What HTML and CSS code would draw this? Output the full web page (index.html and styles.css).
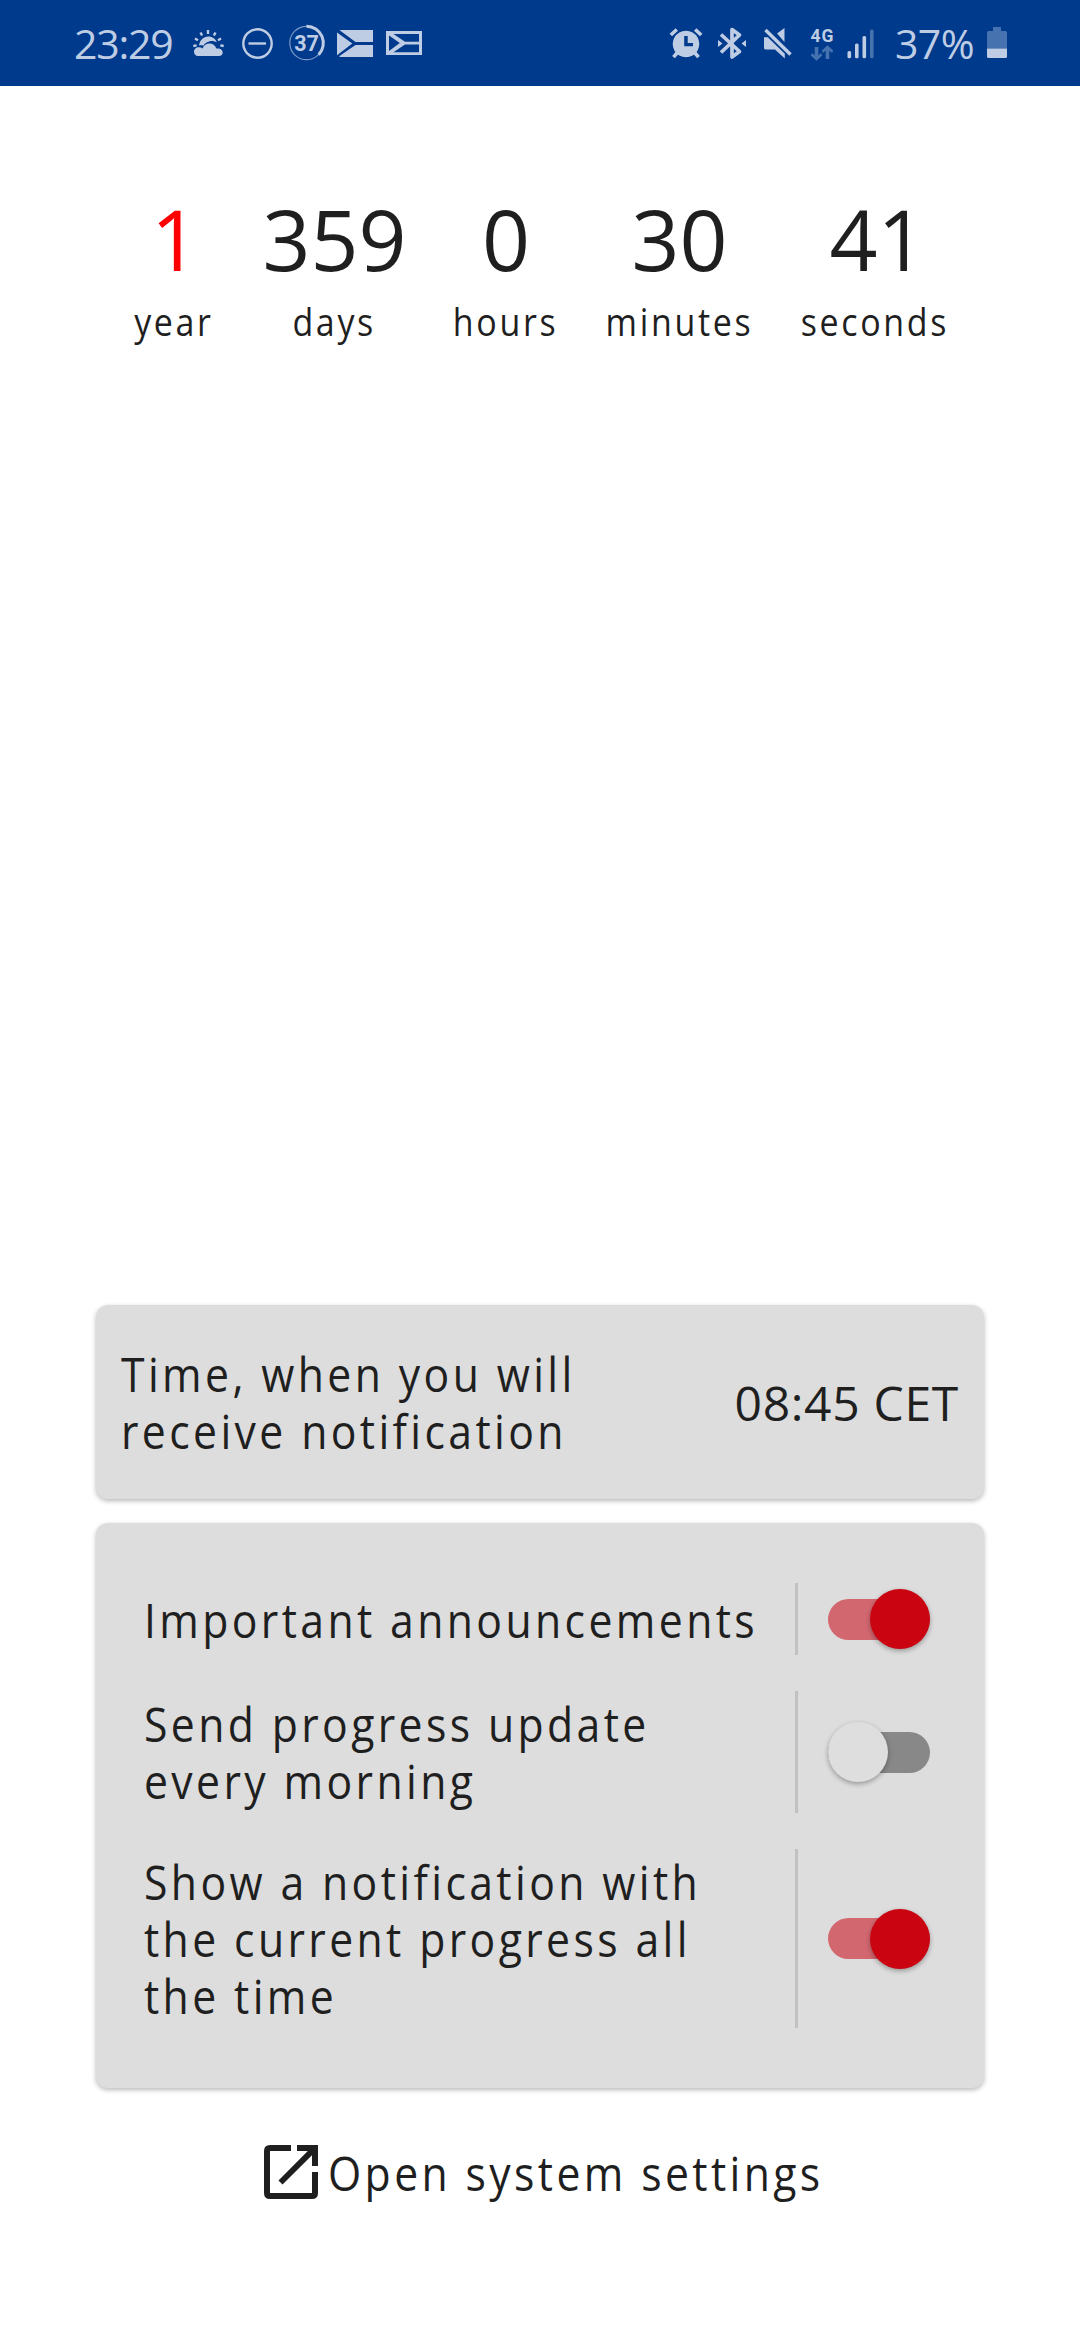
FILE: index.html
```
<!DOCTYPE html>
<html lang="en">
<head>
<meta charset="utf-8">
<title>Countdown</title>
<link rel="stylesheet" href="styles.css">
</head>
<body>
<header class="status">
  <span class="clock">23:29</span>
  <svg class="status-left" viewBox="190 0 234 86" width="234" height="86">
    <g fill="none" stroke="#bfcde4" stroke-width="2.4">
      <path d="M208 30v4M200.500 32.500l1.600 3M215.500 32.500l-1.600 3M195 38.500l3 1.700M221 38.500l-3 1.700M193.300 46l3.400-.6M223.700 46l-3.400-.6"/>
      <circle cx="257.500" cy="43.500" r="14.200"/>
      <path d="M248.500 43.500h17.500"/>
      <circle cx="306.500" cy="43" r="16.700" stroke-width="1.200" opacity=".65"/>
      <path d="M306.500 26.200a16.800 16.800 0 0 1 12.200 28.400" stroke-width="3"/>
    </g>
    <g fill="#bfcde4">
      <path d="M199 45.500c.8-5.500 4.500-9 9.300-9 4 0 7.300 2.300 8.600 6-2-1.300-4.600-1.800-6.900-1.300-3.400.6-5.600 2.500-6.600 4.600-1.600-.6-3-.6-4.400-.3z"/>
      <path d="M198 56a4 4 0 0 1-4-4.200c0-2.800 2.300-4.700 5-4.600 1.400 0 2.500.4 3.500 1.200 1.300-3.200 4-5 7-5 3.500 0 6 2 6.800 5.200 3-.6 6.400.8 6.400 4 0 2-1.500 3.400-3.700 3.400z"/>
      <path d="M339.500 30H373v12h-17.500L341 31.200zM337 32.600L352.300 43.400 337 55.200zM355.500 45H373v12h-33.500v-1z"/>
      <path fill-rule="evenodd" d="M386 31h36v24h-36zM393.500 34l11.500 7.800h14V34zM389 35.500v15.600L399.800 43zM405 44.600L393.500 52.200H419v-7.600z"/>
    </g>
    <text class="badge" x="306.500" y="51" text-anchor="middle">37</text>
  </svg>
  <svg class="status-right" viewBox="668 0 210 86" width="210" height="86">
    <g fill="none" stroke="#bfcde4" stroke-width="3.600">
      <path d="M670.800 35l6-5.500M701.200 35l-6-5.500M677 53l-3.500 4.200M695 53l3.500 4.200"/>
      <path d="M721 34.500l18.500 17-7.500 5.500V29.500l7.500 5.500L721 52.500" stroke-width="3.700" stroke-linejoin="round"/>
      <path d="M765.500 30L790.500 54.500" stroke-width="3.400"/>
    </g>
    <g fill="#bfcde4">
      <path fill-rule="evenodd" d="M686 30.700a13.300 13.300 0 1 1-.01 0zM684.200 36v10.300H693V43h-5.300v-7z"/>
      <path d="M718 40l4.500 3.500L718 47zM746 40l-4.500 3.500L746 47z"/>
      <path d="M784.500 28v14L777 33.500zM764 37.200h3.800l17 16.600V58.500L775 49.500h-9.600q-1.400 0-1.400-1.400z"/>
      <rect x="847.500" y="51" width="3.600" height="7.300" rx="1.500"/>
      <rect x="855" y="43.500" width="3.600" height="14.800" rx="1.500"/>
      <rect x="862.500" y="36" width="3.600" height="22.300" rx="1.500"/>
    </g>
    <g fill="#4672b0">
      <rect x="870" y="29.500" width="3.600" height="28.800" rx="1.500"/>
      <path d="M814.700 47h3.600v8.500l2.700-2.500 1.200 2.500-5.700 5.300-5.700-5.300 1.200-2.500 2.700 2.500zM825.700 59h3.600v-8.500l2.700 2.500 1.200-2.500-5.700-5.300-5.700 5.300 1.200 2.500 2.700-2.500z"/>
    </g>
    <text class="net" x="810.500" y="41.500" textLength="23">4G</text>
  </svg>
  <span class="percent">37%</span>
  <svg class="battery" viewBox="0 0 20 32" width="20" height="32">
    <path fill="#4672b0" d="M6 0h8v4h4.500q1.500 0 1.500 1.500V21.500H0V5.500Q0 4 1.500 4H6z"/>
    <path fill="#bfcde4" d="M0 21.500h20v8q0 1.500-1.500 1.500h-17Q0 31 0 29.500z"/>
  </svg>
</header>

<section class="countdown">
  <div class="unit unit-first"><span class="num">1</span><span class="label">year</span></div>
  <div class="unit"><span class="num">359</span><span class="label">days</span></div>
  <div class="unit"><span class="num">0</span><span class="label">hours</span></div>
  <div class="unit"><span class="num">30</span><span class="label">minutes</span></div>
  <div class="unit unit-last"><span class="num">41</span><span class="label">seconds</span></div>
</section>

<main class="cards">
  <section class="card time-card">
    <p class="text">Time, when you will<br>receive notification</p>
    <span class="time">08:45 CET</span>
  </section>
  <section class="card options">
    <div class="option">
      <p class="text">Important announcements</p>
      <span class="toggle on"><i class="thumb"></i></span>
    </div>
    <div class="option">
      <p class="text">Send progress update<br>every morning</p>
      <span class="toggle"><i class="thumb"></i></span>
    </div>
    <div class="option">
      <p class="text">Show a notification with<br>the current progress all<br>the time</p>
      <span class="toggle on"><i class="thumb"></i></span>
    </div>
  </section>
</main>

<a class="settings">
  <svg viewBox="0 0 54 54" width="54" height="54" fill="#1f1f1f">
    <path d="M27 0v6H6v42h42V27h6v21q0 6-6 6H6q-6 0-6-6V6q0-6 6-6z"/>
    <path d="M33 0h21v21h-6V10.200L18.500 39.500l-4-4L43.800 6H33z"/>
  </svg>
  <span class="text">Open system settings</span>
</a>
</body>
</html>
```
FILE: styles.css
```
* { box-sizing: border-box; }
body {
  margin: 0;
  width: 1080px;
  height: 2340px;
  display: flex;
  flex-direction: column;
  background: #fff;
  color: #1f1f1f;
  font-family: "Open Sans", sans-serif;
  font-weight: 370;
}
.status {
  height: 86px;
  flex: none;
  display: flex;
  align-items: center;
  padding: 0 73px 0 74px;
  background: #003a8c;
  color: #bfcde4;
  font-size: 41px;
  line-height: 86px;
}
.clock { width: 116px; letter-spacing: -1.200px; }
.status-right { margin-left: 244px; }
.percent { margin-left: 17px; width: 92px; white-space: nowrap; letter-spacing: -0.600px; }
.battery { flex: none; }
.badge { font: 700 21.500px Roboto, sans-serif; fill: #bfcde4; }
.net { font: 700 17.500px Roboto, sans-serif; fill: #bfcde4; }

.countdown {
  display: grid;
  grid-template-columns: 105px 216px 127px 220px 170px;
  padding: 98px 0 0 120px;
}
.unit { display: flex; flex-direction: column; align-items: center; }
.num { font-size: 84px; line-height: 110px; padding-left: 3px; }
.unit-first .num { color: #f00; padding-left: 5px; }
.unit-last .num { padding-left: 9px; }
.label {
  margin: 1px -3px 0 0;
  font-size: 38.400px;
  line-height: 52px;
  letter-spacing: 3px;
  transform: scaleX(.885);
}

.cards {
  margin: auto 96px 0;
  display: flex;
  flex-direction: column;
  gap: 24px;
}
.card {
  background: #ddd;
  border-radius: 12px;
  box-shadow: 0 2px 5px rgba(0, 0, 0, .28);
}
.text {
  margin: 0;
  font-size: 48px;
  line-height: 57px;
  letter-spacing: 3.800px;
  white-space: nowrap;
  transform: scaleX(.89);
  transform-origin: left center;
}
.time-card {
  height: 194px;
  display: flex;
  align-items: center;
  justify-content: space-between;
  padding: 0 25px;
}
.time { font-size: 48px; letter-spacing: 0.700px; line-height: 57px; }
.options {
  height: 565px;
  padding: 60px 54px 0 48px;
  display: flex;
  flex-direction: column;
  gap: 36px;
}
.option {
  display: grid;
  grid-template-columns: 651px 135px;
  align-items: center;
  height: 72px;
}
.option:nth-child(2) { height: 122px; }
.option:nth-child(3) { height: 179px; }
.toggle {
  height: 100%;
  border-left: 3px solid #c1c1c1;
  padding-left: 30px;
  display: grid;
  grid-template-columns: 102px;
  align-items: center;
}
.toggle::before {
  content: "";
  grid-area: 1 / 1;
  height: 41px;
  border-radius: 21px;
  background: #888;
}
.thumb {
  grid-area: 1 / 1;
  width: 60px;
  height: 60px;
  border-radius: 50%;
  background: #dedede;
  box-shadow: 0 2px 5px rgba(0, 0, 0, .32);
  z-index: 1;
}
.on::before { background: #d36770; }
.on .thumb { background: #ca0411; justify-self: end; }

.settings {
  display: flex;
  align-items: flex-start;
  gap: 10px;
  height: 252px;
  padding: 57px 0 0 264px;
}
.settings .text { margin-top: -1px; }
```
